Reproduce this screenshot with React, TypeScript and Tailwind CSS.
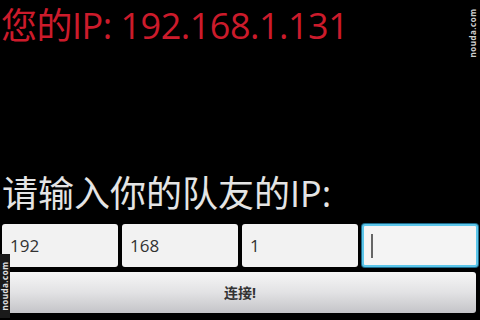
import React from "react";

const font = { fontFamily: '"Open Sans", "Noto Sans CJK SC", sans-serif' };

export default function App() {
  const parts = ["192", "168", "1", ""];
  return (
    <div
      className="relative w-[480px] h-[320px] bg-black overflow-hidden flex flex-col"
      style={font}
    >
      <div className="text-[36px] leading-[40px] tracking-[-0.5px] text-[#cc1b2b] mt-[6px] pl-[1px] whitespace-nowrap">
        您的IP: 192.168.1.131
      </div>
      <div className="flex-1" />
      <div className="text-[36px] leading-[40px] text-[#e4e4e4] pl-[2px] whitespace-nowrap">
        请输入你的队友的IP:
      </div>
      <div className="grid grid-cols-4 gap-[4px] px-[2px] mt-[10px] h-[43px]">
        {parts.map((p, i) =>
          i === 3 ? (
            <div
              key={i}
              className="rounded-[3px] bg-[#f4f4f4] border-2 border-[#5cc6ea] shadow-[0_0_0_1px_#1d6a8a] flex items-center pl-[7px]"
            >
              <div className="w-[2px] h-[24px] bg-[#666]" />
            </div>
          ) : (
            <div
              key={i}
              className="rounded-[3px] bg-[#f2f2f2] flex items-center pl-[8px] text-[17px] text-[#333]"
            >
              {p}
            </div>
          )
        )}
      </div>
      <div className="mx-[4px] mt-[5px] mb-[7px] h-[41px] rounded-[3px] bg-gradient-to-b from-[#f6f6f6] via-[#e2e2e4] to-[#c4c4c8] flex items-center justify-center text-[14px] font-bold text-[#333]">
        连接!
      </div>

      <div className="absolute right-[2px] top-[4px] h-[58px] w-[10px] flex items-center justify-center">
        <span className="-rotate-90 whitespace-nowrap text-[8px] leading-none text-[#cfcfcf] font-bold tracking-[0.5px]">
          nouda.com
        </span>
      </div>
      <div className="absolute left-0 top-[254px] h-[64px] w-[10px] bg-[#1a1a1a] flex items-center justify-center">
        <span className="-rotate-90 whitespace-nowrap text-[8px] leading-none text-[#e0e0e0] font-bold tracking-[0.5px]">
          nouda.com
        </span>
      </div>
    </div>
  );
}
